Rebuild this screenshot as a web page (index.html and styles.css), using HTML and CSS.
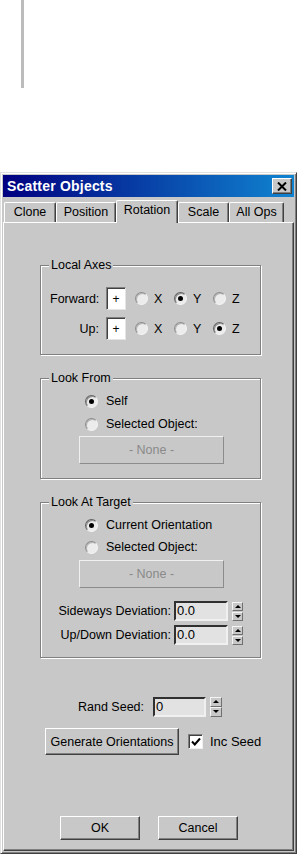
FILE: index.html
```html
<!DOCTYPE html>
<html lang="en">
<head>
    <meta charset="UTF-8">
    <meta name="viewport" content="width=device-width, initial-scale=1.0">
    <title>Scatter Objects</title>
    <link rel="stylesheet" href="styles.css">
</head>
<body>
    <div class="top-bar"></div>

    <div class="dialog">
        <div class="title-bar">
            <span class="title">Scatter Objects</span>
            <button class="close-btn">
                <svg width="10" height="9" viewBox="0 0 10 9">
                    <path d="M1 0.5 L9 8.5 M9 0.5 L1 8.5" stroke="#000" stroke-width="2"/>
                </svg>
            </button>
        </div>

        <div class="tabs">
            <div class="tab tab-clone">Clone</div>
            <div class="tab tab-position">Position</div>
            <div class="tab tab-rotation active">Rotation</div>
            <div class="tab tab-scale">Scale</div>
            <div class="tab tab-allops">All Ops</div>
        </div>

        <div class="panel">
            <!-- Local Axes -->
            <div class="group group-axes">
                <div class="group-title">Local Axes</div>
                <div class="axis-row first">
                    <span class="axis-label">Forward:</span>
                    <span class="sign-box">+</span>
                    <span class="axis"><span class="radio"></span>X</span>
                    <span class="axis"><span class="radio checked"></span>Y</span>
                    <span class="axis"><span class="radio"></span>Z</span>
                </div>
                <div class="axis-row">
                    <span class="axis-label">Up:</span>
                    <span class="sign-box">+</span>
                    <span class="axis"><span class="radio"></span>X</span>
                    <span class="axis"><span class="radio"></span>Y</span>
                    <span class="axis"><span class="radio checked"></span>Z</span>
                </div>
            </div>

            <!-- Look From -->
            <div class="group group-from">
                <div class="group-title">Look From</div>
                <div class="option first"><span class="radio checked"></span>Self</div>
                <div class="option second"><span class="radio"></span>Selected Object:</div>
                <button class="pick-btn">- None -</button>
            </div>

            <!-- Look At Target -->
            <div class="group group-target">
                <div class="group-title">Look At Target</div>
                <div class="option first"><span class="radio checked"></span>Current Orientation</div>
                <div class="option second-b"><span class="radio"></span>Selected Object:</div>
                <button class="pick-btn pick-btn-b">- None -</button>
                <div class="spin-row dev-first">
                    <span class="spin-label">Sideways Deviation:</span>
                    <span class="field">0.0</span>
                    <span class="spinner"><span class="up"></span><span class="down"></span></span>
                </div>
                <div class="spin-row dev-second">
                    <span class="spin-label">Up/Down Deviation:</span>
                    <span class="field">0.0</span>
                    <span class="spinner"><span class="up"></span><span class="down"></span></span>
                </div>
            </div>

            <div class="seed-row">
                <span class="seed-label">Rand Seed:</span>
                <span class="field seed-field">0</span>
                <span class="spinner seed-spinner"><span class="up"></span><span class="down"></span></span>
            </div>

            <div class="generate-row">
                <button class="btn generate-btn">Generate Orientations</button>
                <span class="checkbox">
                    <svg width="10" height="10" viewBox="0 0 10 10">
                        <path d="M1 4.5 L3.8 7.5 L9 1.5" fill="none" stroke="#000" stroke-width="2"/>
                    </svg>
                </span>
                <span class="check-label">Inc Seed</span>
            </div>

            <div class="footer-row">
                <button class="btn ok-btn">OK</button>
                <button class="btn cancel-btn">Cancel</button>
            </div>
        </div>
    </div>
</body>
</html>
```

FILE: styles.css
```css
* {
    margin: 0;
    padding: 0;
    box-sizing: border-box;
}

body {
    font-family: "Liberation Sans", Arial, sans-serif;
    font-size: 12.5px;
    color: #000;
    background-color: #fff;
    width: 297px;
}

button {
    font-family: inherit;
    font-size: inherit;
    color: inherit;
    background: none;
    border: none;
}

.top-bar {
    width: 3px;
    height: 88px;
    margin-left: 21px;
    background-color: #bcbcbc;
}

/* Ventana */
.dialog {
    margin-top: 84px;
    width: 297px;
    height: 682px;
    background-color: #c8c8c8;
    border: 1px solid;
    border-color: #e0e0e0 #404040 #404040 #e0e0e0;
    box-shadow: inset 1px 1px 0 #fff, inset -1px -1px 0 #808080;
    padding: 2px;
    display: flex;
    flex-direction: column;
}

.title-bar {
    height: 22px;
    display: flex;
    align-items: center;
    justify-content: space-between;
    background: linear-gradient(to right, #000080, #1084d0);
    padding: 0 2px 0 4px;
}

.title {
    color: #fff;
    font-weight: bold;
    font-size: 14px;
    letter-spacing: 0.2px;
}

.close-btn {
    width: 20px;
    height: 16px;
    background-color: #c8c8c8;
    border: 1px solid;
    border-color: #fff #404040 #404040 #fff;
    box-shadow: inset -1px -1px 0 #808080;
    display: flex;
    align-items: center;
    justify-content: center;
}

/* Pestañas */
.tabs {
    height: 25px;
    display: flex;
    align-items: flex-end;
    padding-left: 1px;
    position: relative;
    z-index: 1;
}

.tab {
    height: 20px;
    display: flex;
    align-items: center;
    justify-content: center;
    border: 1px solid;
    border-bottom: none;
    border-color: #fff #404040 #c8c8c8 #fff;
    box-shadow: inset -1px 0 0 #808080;
    border-radius: 2px 2px 0 0;
    padding-bottom: 1px;
}

.tab-clone { width: 52px; }
.tab-position { width: 60px; }
.tab-rotation { width: 62px; }
.tab-scale { width: 51px; }
.tab-allops { width: 55px; }

.tab.active {
    height: 23px;
    margin-bottom: -1px;
    background-color: #c8c8c8;
    padding-bottom: 4px;
}

.panel {
    flex: 1;
    border: 1px solid;
    border-color: #fff #404040 #404040 #fff;
    box-shadow: inset -1px -1px 0 #808080;
    display: flex;
    flex-direction: column;
}

/* Grupos */
.group {
    margin-left: 36px;
    width: 221px;
    border: 1px solid #808080;
    box-shadow: 1px 1px 0 #fff, inset 1px 1px 0 #fff;
    display: flex;
    flex-direction: column;
}

.group-axes {
    margin-top: 42px;
    height: 90px;
}

.group-from {
    margin-top: 23px;
    height: 101px;
}

.group-target {
    margin-top: 23px;
    height: 156px;
}

.group-title {
    margin: -8px 0 0 8px;
    padding: 0 2px;
    line-height: 15px;
    height: 15px;
    width: fit-content;
    background-color: #c8c8c8;
}

.axis-row {
    display: flex;
    align-items: center;
    height: 23px;
    margin-top: 7px;
    padding-left: 9px;
}

.axis-row.first {
    margin-top: 14px;
}

.axis-label {
    width: 49px;
    text-align: right;
    margin-right: 7px;
}

.sign-box {
    width: 20px;
    height: 23px;
    background-color: #fff;
    border: 1px solid;
    border-color: #808080 #e4e4e4 #e4e4e4 #808080;
    box-shadow: inset 1px 1px 0 #404040;
    display: flex;
    align-items: center;
    justify-content: center;
    font-size: 12px;
    margin-right: 9px;
}

.axis {
    width: 39px;
    display: flex;
    align-items: center;
}

.radio {
    width: 13px;
    height: 13px;
    border-radius: 50%;
    background-color: #ececec;
    border: 1px solid;
    border-color: #8c8c8c #f4f4f4 #f4f4f4 #8c8c8c;
    box-shadow: inset 1px 1px 0 #b4b4b4;
    margin-right: 6px;
    position: relative;
    flex-shrink: 0;
}

.radio.checked {
    border-color: #606060 #f4f4f4 #f4f4f4 #606060;
    box-shadow: inset 1px 1px 0 #909090;
}

.radio.checked::after {
    content: "";
    position: absolute;
    left: 3px;
    top: 3px;
    width: 5px;
    height: 5px;
    border-radius: 50%;
    background-color: #000;
}

.option {
    display: flex;
    align-items: center;
    height: 16px;
    padding-left: 44px;
}

.option .radio {
    margin-right: 8px;
}

.option.first { margin-top: 7px; }
.option.second { margin-top: 7px; }
.option.second-b { margin-top: 6px; }

.pick-btn {
    margin: 4px 0 0 38px;
    width: 145px;
    height: 28px;
    border: 1px solid;
    border-color: #f0f0f0 #8c8c8c #8c8c8c #f0f0f0;
    color: #8a8a8a;
    text-align: center;
}

.pick-btn-b {
    margin-top: 5px;
}

/* Campos numéricos */
.spin-row {
    display: flex;
    align-items: center;
    height: 20px;
}

.dev-first { margin-top: 13px; }
.dev-second { margin-top: 4px; }

.spin-label {
    width: 130px;
    text-align: right;
    margin-right: 3px;
}

.field {
    width: 54px;
    height: 20px;
    background-color: #e2e2e2;
    border: 2px solid;
    border-color: #303030 #f0f0f0 #f0f0f0 #303030;
    padding-left: 1px;
    line-height: 16px;
    font-size: 13px;
    margin-right: 4px;
}

.spinner {
    width: 11px;
    height: 19px;
    display: flex;
    flex-direction: column;
    justify-content: space-between;
}

.spinner span {
    height: 9px;
    border: 1px solid;
    border-color: #f4f4f4 #707070 #707070 #f4f4f4;
    position: relative;
}

.spinner span::after {
    content: "";
    position: absolute;
    left: 2px;
    width: 0;
    height: 0;
    border-left: 3px solid transparent;
    border-right: 3px solid transparent;
}

.spinner .up::after {
    top: 2px;
    border-bottom: 3px solid #000;
}

.spinner .down::after {
    top: 2px;
    border-top: 3px solid #000;
}

.seed-row {
    display: flex;
    align-items: center;
    height: 20px;
    margin: 39px 0 0 74px;
}

.seed-label {
    margin-right: 9px;
}

.seed-field {
    width: 53px;
    margin-right: 4px;
}

.seed-spinner {
    width: 12px;
    height: 20px;
}

.seed-spinner span {
    height: 10px;
}

.seed-spinner span::after {
    left: 2px;
}

.btn {
    border: 1px solid;
    border-color: #fff #404040 #404040 #fff;
    box-shadow: inset -1px -1px 0 #808080;
    text-align: center;
}

.generate-row {
    display: flex;
    align-items: center;
    margin: 11px 0 0 41px;
    height: 27px;
}

.generate-btn {
    width: 134px;
    height: 27px;
    white-space: nowrap;
    margin-right: 9px;
}

.checkbox {
    width: 15px;
    height: 15px;
    background-color: #fff;
    border: 1px solid;
    border-color: #808080 #f0f0f0 #f0f0f0 #808080;
    box-shadow: inset 1px 1px 0 #404040;
    display: flex;
    align-items: center;
    justify-content: center;
    margin-right: 7px;
}

.check-label {
    font-size: 13px;
}

.footer-row {
    display: flex;
    gap: 18px;
    margin: 61px 0 0 56px;
}

.ok-btn,
.cancel-btn {
    width: 80px;
    height: 24px;
}
```
